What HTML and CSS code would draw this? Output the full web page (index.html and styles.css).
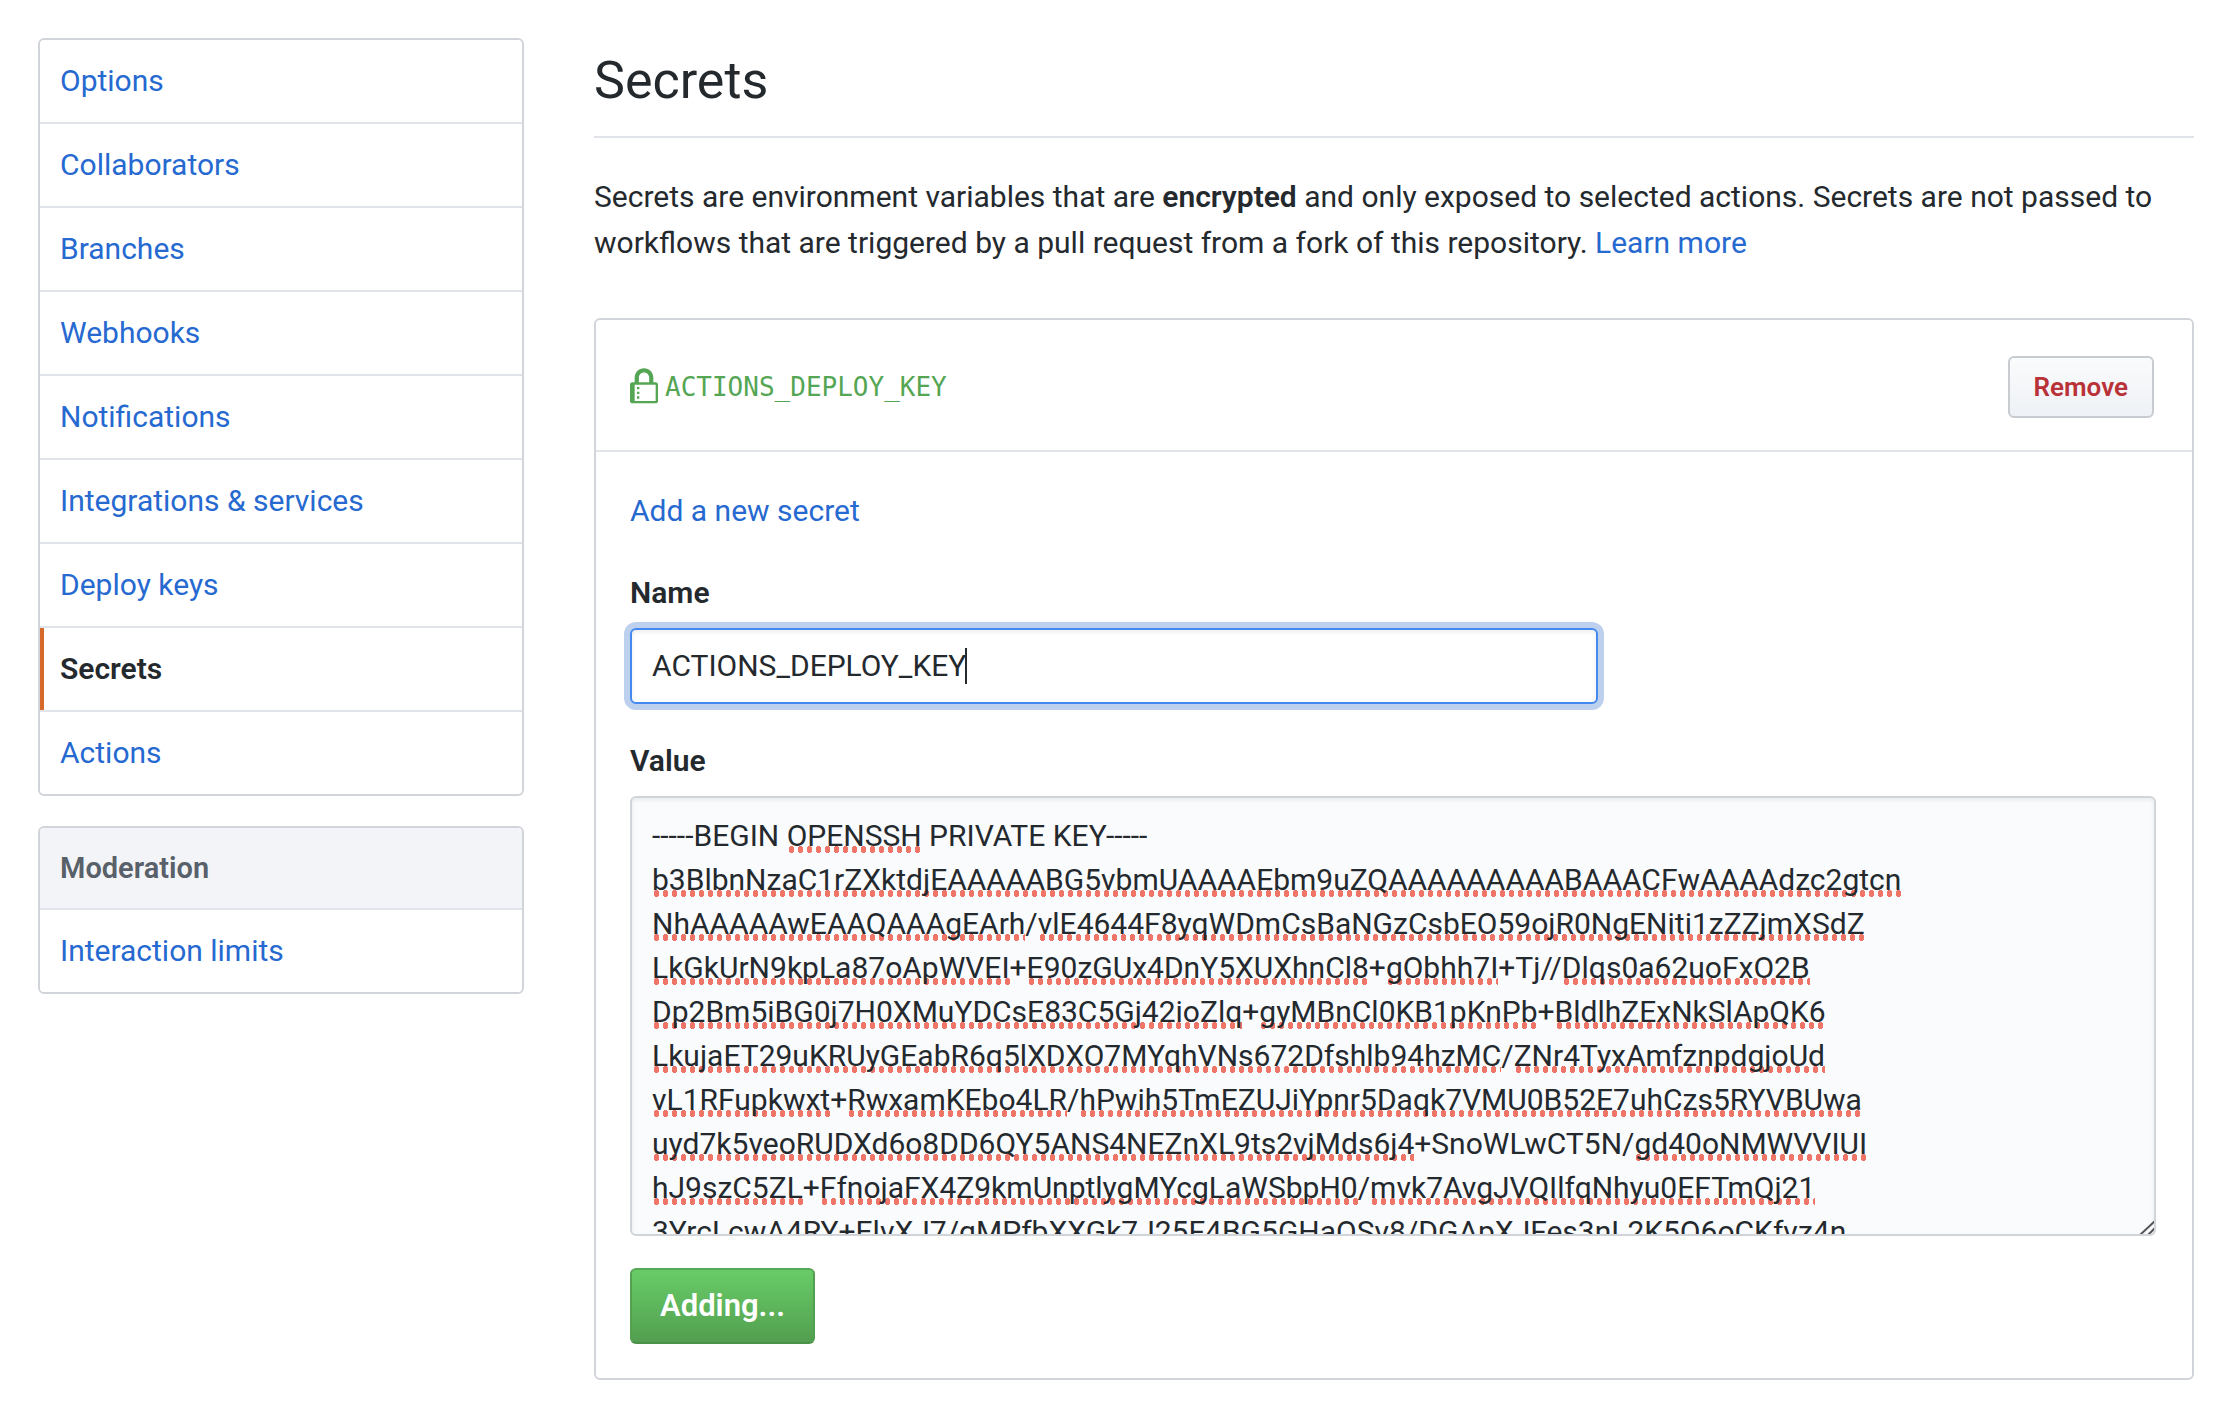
FILE: index.html
```html
<!DOCTYPE html>
<html lang="en">
<head>
  <meta charset="UTF-8" />
  <meta name="viewport" content="width=device-width, initial-scale=1.0"/>
  <title>Secrets</title>
  <link rel="stylesheet" href="styles.css">
</head>
<body>
  <div class="page">
    <aside class="sidebar">
      <nav class="menu" aria-label="Settings">
        <a class="menu-item" href="#">Options</a>
        <a class="menu-item" href="#">Collaborators</a>
        <a class="menu-item" href="#">Branches</a>
        <a class="menu-item" href="#">Webhooks</a>
        <a class="menu-item" href="#">Notifications</a>
        <a class="menu-item" href="#">Integrations &amp; services</a>
        <a class="menu-item" href="#">Deploy keys</a>
        <a class="menu-item selected" href="#" aria-current="page">Secrets</a>
        <a class="menu-item" href="#">Actions</a>
      </nav>
      <nav class="menu" aria-label="Moderation">
        <h3 class="menu-heading">Moderation</h3>
        <a class="menu-item" href="#">Interaction limits</a>
      </nav>
    </aside>

    <main class="content">
      <h2 class="title">Secrets</h2>
      <p class="intro">Secrets are environment variables that are <strong>encrypted</strong> and only exposed to selected actions. Secrets are not passed to workflows that are triggered by a pull request from a fork of this repository. <a href="#">Learn more</a></p>

      <div class="box">
        <div class="box-header">
          <svg class="lock" viewBox="0 0 12 16" aria-hidden="true"><path fill-rule="evenodd" d="M4 13H3v-1h1v1zm8-6v7c0 .55-.45 1-1 1H1c-.55 0-1-.45-1-1V7c0-.55.45-1 1-1h1V4c0-2.21 1.79-4 4-4s4 1.79 4 4v2h1c.55 0 1 .45 1 1zM3.8 6h4.41V4c0-1.22-.98-2.2-2.2-2.2-1.22 0-2.2.98-2.2 2.2v2H3.8zM11 7H2v7h9V7zM4 8H3v1h1V8zm0 2H3v1h1v-1z"/></svg>
          <code class="secret-name">ACTIONS_DEPLOY_KEY</code>
          <button type="button" class="btn btn-danger">Remove</button>
        </div>

        <form class="box-body">
          <a class="add-link" href="#">Add a new secret</a>

          <label for="name">Name</label>
          <div class="name-field">
            <input type="text" id="name" class="name-input" value="ACTIONS_DEPLOY_KEY" spellcheck="false" autocomplete="off" autofocus />
            <span class="caret" aria-hidden="true"></span>
          </div>

          <label for="value">Value</label>
          <div class="editor">
            <div class="spelling" id="spelling" aria-hidden="true"></div>
            <textarea id="value" class="value-input" spellcheck="false">-----BEGIN OPENSSH PRIVATE KEY-----
b3BlbnNzaC1rZXktdjEAAAAABG5vbmUAAAAEbm9uZQAAAAAAAAABAAACFwAAAAdzc2gtcn
NhAAAAAwEAAQAAAgEArh/vlE4644F8yqWDmCsBaNGzCsbEO59ojR0NgENiti1zZZjmXSdZ
LkGkUrN9kpLa87oApWVEI+E90zGUx4DnY5XUXhnCl8+gObhh7I+Tj//Dlqs0a62uoFxO2B
Dp2Bm5iBG0j7H0XMuYDCsE83C5Gj42ioZlq+gyMBnCl0KB1pKnPb+BldlhZExNkSlApQK6
LkujaET29uKRUyGEabR6q5lXDXO7MYqhVNs672Dfshlb94hzMC/ZNr4TyxAmfznpdgjoUd
vL1RFupkwxt+RwxamKEbo4LR/hPwih5TmEZUJiYpnr5Daqk7VMU0B52E7uhCzs5RYVBUwa
uyd7k5veoRUDXd6o8DD6QY5ANS4NEZnXL9ts2vjMds6j4+SnoWLwCT5N/gd40oNMWVVIUI
hJ9szC5ZL+FfnojaFX4Z9kmUnptlygMYcgLaWSbpH0/mvk7AvgJVQIlfqNhyu0EFTmQj21
3YrcLcwA4RY+ElvXJ7/qMPfbXXGk7J25F4BG5GHaOSv8/DGApXJFes3nL2K5Q6oCKfvz4n</textarea>
          </div>

          <button type="button" class="btn btn-primary">Adding...</button>
        </form>
      </div>
    </main>
  </div>

  <script src="script.js"></script>
</body>
</html>
```
FILE: styles.css
```css
* {
  box-sizing: border-box;
}

body {
  margin: 0;
  background: #fff;
  color: #24292e;
  font-family: Roboto, "Liberation Sans", sans-serif;
  font-size: 30px;
  line-height: 46px;
}

a {
  color: #2669d0;
  text-decoration: none;
}

.page {
  display: flex;
  align-items: flex-start;
  gap: 70px;
  padding: 38px 32px 38px 38px;
}

/* sidebar */
.sidebar {
  display: flex;
  flex-direction: column;
  gap: 30px;
  flex: 0 0 486px;
}

.menu {
  border: 2px solid #d1d5da;
  border-radius: 6px;
  overflow: hidden;
}

.menu-item {
  display: block;
  padding: 16px 20px;
  line-height: 50px;
}

.menu-item + .menu-item,
.menu-heading + .menu-item {
  border-top: 2px solid #e1e4e8;
}

.menu-item.selected {
  color: #24292e;
  font-weight: 600;
  box-shadow: inset 4px 0 0 #d66a2c;
}

.menu-heading {
  margin: 0;
  padding: 16px 20px;
  background: #f3f4f8;
  color: #586069;
  font-size: 29px;
  font-weight: 600;
  line-height: 48px;
}

/* main column */
.content {
  flex: 1;
  min-width: 0;
}

.title {
  margin: 0;
  padding-bottom: 12px;
  border-bottom: 2px solid #e1e4e8;
  font-size: 52px;
  font-weight: 400;
  line-height: 86px;
}

.intro {
  margin: 36px 0 52px;
}

.intro strong {
  font-weight: 600;
}

.box {
  border: 2px solid #d1d5da;
  border-radius: 6px;
}

.box-header {
  display: flex;
  align-items: center;
  padding: 36px 38px 32px 34px;
  border-bottom: 2px solid #e1e4e8;
  color: #55a654;
}

.lock {
  width: 28px;
  height: 38px;
  margin-right: 7px;
  fill: currentColor;
}

.secret-name {
  flex: 1;
  font-family: "DejaVu Sans Mono", monospace;
  font-size: 26px;
}

.box-body {
  display: flex;
  flex-direction: column;
  align-items: flex-start;
  padding: 36px 36px 34px 34px;
}

.add-link {
  margin-bottom: 36px;
}

label {
  margin-bottom: 12px;
  font-weight: 600;
}

.name-field {
  position: relative;
  width: 64%;
  max-width: 968px;
  margin-bottom: 34px;
}

.name-input {
  display: block;
  width: 100%;
  padding: 14px 20px;
  border: 2px solid #4389f0;
  border-radius: 6px;
  outline: none;
  background: #fff;
  box-shadow: inset 0 2px 4px rgba(27, 31, 35, 0.08), 0 0 0 6px #bdd1ef;
  color: inherit;
  caret-color: transparent;
  font: inherit;
  line-height: 44px;
}

.caret {
  position: absolute;
  top: 20px;
  left: 335px;
  width: 2px;
  height: 36px;
  background: #24292e;
}

/* textarea with the spelling marks behind it */
.editor {
  display: grid;
  align-self: stretch;
  margin-bottom: 32px;
  border: 2px solid #d1d5da;
  border-radius: 6px;
  overflow: hidden;
  background: #fafbfd;
  box-shadow: inset 0 2px 4px rgba(27, 31, 35, 0.08);
}

.spelling,
.value-input {
  grid-area: 1 / 1;
  height: 436px;
  padding: 16px 20px;
  font: inherit;
  line-height: 44px;
  white-space: pre-wrap;
}

.spelling {
  color: transparent;
  overflow: hidden;
}

.spelling mark {
  color: transparent;
  background: radial-gradient(ellipse 3px 4px, #ee7568 85%, transparent) left bottom / 9px 7px repeat-x;
}

.value-input {
  width: 100%;
  margin: 0;
  border: 0;
  outline: none;
  background: transparent;
  color: inherit;
  resize: vertical;
  overflow: auto;
}

.value-input::-webkit-scrollbar {
  width: 20px;
  height: 20px;
  background: transparent;
}

.value-input::-webkit-resizer {
  background: url("data:image/svg+xml,%3Csvg xmlns='http://www.w3.org/2000/svg' width='20' height='20' viewBox='0 0 20 20'%3E%3Cpath d='M1 16L16 2M9 16l7-7' stroke='%23555' stroke-width='2' fill='none'/%3E%3C/svg%3E") no-repeat;
}

/* buttons */
.btn {
  border: 2px solid #c8cbcf;
  border-radius: 6px;
  font-family: inherit;
  font-weight: 600;
  cursor: pointer;
}

.btn-danger {
  padding: 8px 24px;
  background: linear-gradient(#fafbfc, #eef1f5);
  color: #b83237;
  font-size: 26px;
  line-height: 42px;
}

.btn-primary {
  padding: 14px 28px;
  border-color: #58a956 #52a050 #4b914a;
  background: linear-gradient(#69cc68, #529f4f);
  color: #fff;
  font-size: 31px;
  line-height: 44px;
}
```
FILE: script.js
```js
const value = document.getElementById("value");
const spelling = document.getElementById("spelling");
const known = ["BEGIN", "PRIVATE", "KEY", "Tj", "SnoWLwCT5N"];

// underline every word that is not in the list
function markWords() {
  spelling.innerHTML = value.value.replace(/[A-Za-z0-9]+/g, word =>
    known.includes(word) ? word : `<mark>${word}</mark>`
  );
}

value.addEventListener("input", markWords);
value.addEventListener("scroll", () => {
  spelling.scrollTop = value.scrollTop;
});
markWords();
```
